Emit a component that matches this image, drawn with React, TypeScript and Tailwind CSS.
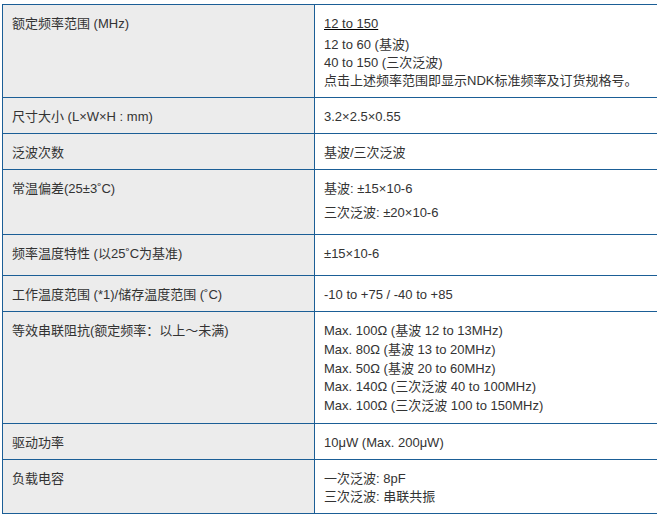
const LINE = "border-[#1b5e96]";

type Row = {
  label: string;
  value: React.ReactNode;
  valuePad?: string;
};

const ROWS: Row[] = [
  {
    label: "额定频率范围 (MHz)",
    value: (
      <>
        <div className="mb-[3px]">
          <a href="#" className="underline decoration-black">
            12 to 150
          </a>
        </div>
        <div>12 to 60 (基波)</div>
        <div>40 to 150 (三次泛波)</div>
        <div>点击上述频率范围即显示NDK标准频率及订货规格号。</div>
      </>
    ),
  },
  { label: "尺寸大小 (L×W×H : mm)", value: "3.2×2.5×0.55" },
  { label: "泛波次数", value: "基波/三次泛波" },
  {
    label: "常温偏差(25±3˚C)",
    value: (
      <>
        <p className="mb-[6px]">基波: ±15×10-6</p>
        <p className="mb-[5px]">三次泛波: ±20×10-6</p>
      </>
    ),
  },
  {
    label: "频率温度特性 (以25˚C为基准)",
    value: <p className="mb-[5px]">±15×10-6</p>,
  },
  { label: "工作温度范围 (*1)/储存温度范围 (˚C)", value: "-10 to +75 / -40 to +85" },
  {
    label: "等效串联阻抗(额定频率：以上～未满)",
    value: (
      <div className="leading-[18.8px]">
        <div>Max. 100Ω (基波 12 to 13MHz)</div>
        <div>Max. 80Ω (基波 13 to 20MHz)</div>
        <div>Max. 50Ω (基波 20 to 60MHz)</div>
        <div>Max. 140Ω (三次泛波 40 to 100MHz)</div>
        <div>Max. 100Ω (三次泛波 100 to 150MHz)</div>
      </div>
    ),
  },
  { label: "驱动功率", value: "10μW (Max. 200μW)" },
  {
    label: "负载电容",
    value: (
      <>
        <div>一次泛波: 8pF</div>
        <div>三次泛波: 串联共振</div>
      </>
    ),
  },
];

export default function App() {
  return (
    <div
      className="h-[519px] w-[657px] overflow-hidden bg-white pl-[2px] pt-[4px] text-[13px] leading-[18px] text-[#333]"
      style={{
        fontFamily:
          '"Liberation Sans", Arial, "Noto Sans CJK SC", sans-serif',
      }}
    >
      <div className={`w-[700px] border-l border-t ${LINE}`}>
        {ROWS.map((r) => (
          <div key={r.label} className={`flex border-b ${LINE}`}>
            <div
              className={`w-[312px] shrink-0 border-r ${LINE} bg-[#ececec] pb-[7px] pl-[9px] pt-[10px]`}
            >
              {r.label}
            </div>
            <div className="flex-1 pb-[7px] pl-[9px] pt-[10px]">{r.value}</div>
          </div>
        ))}
      </div>
    </div>
  );
}
